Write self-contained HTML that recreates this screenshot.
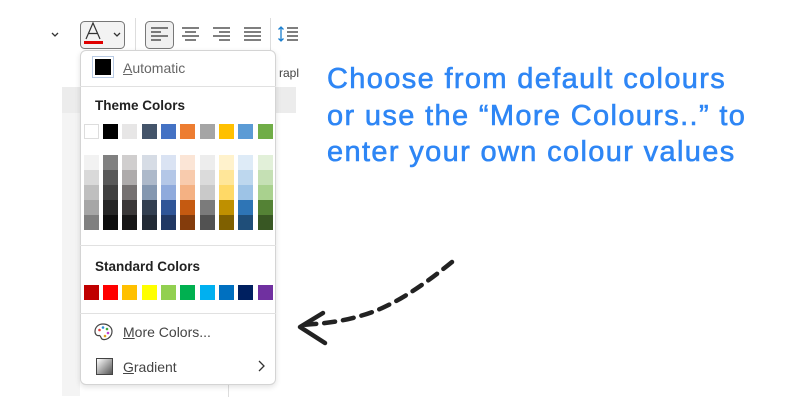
<!DOCTYPE html>
<html><head><meta charset="utf-8"><style>
*{margin:0;padding:0;box-sizing:border-box}
body{width:800px;height:400px;background:#fff;position:relative;overflow:hidden;font-family:"Liberation Sans",sans-serif}
.a{position:absolute}
.sw{position:absolute;width:15px;height:15px}
.col{position:absolute;width:15px;top:155px}
.col div{height:15px}
.txt{position:absolute;left:327px;color:#2e86f5;font-size:29px;line-height:36.5px;-webkit-text-stroke:0.6px #2e86f5;letter-spacing:1.35px;white-space:nowrap}
.lbl{position:absolute;font-size:13.5px;font-weight:bold;color:#222}
.sep{position:absolute;left:80px;width:196px;height:1px;background:#e1e1e1}
.it{position:absolute;font-size:14px;color:#444}
</style></head><body>
<div class="a" style="left:62px;top:87px;width:234px;height:26px;background:#ececec"></div>
<div class="a" style="left:62px;top:113px;width:18px;height:283px;background:#f4f4f4"></div>
<div class="a" style="left:228px;top:385px;width:1px;height:12px;background:#ddd"></div>
<div class="a" style="left:279px;top:66px;font-size:12px;color:#444">rapl</div>

<svg class="a" style="left:0;top:0" width="300" height="50">
<path d="M52 33 l3 3 l3 -3" stroke="#333" stroke-width="1.3" fill="none"/>
<rect x="80.5" y="21.5" width="44" height="27" rx="4" fill="#f3f3f3" stroke="#777"/>
<path d="M86 39 L93 23 L100 39 M88.5 33.5 h9" stroke="#333" stroke-width="1.2" fill="none"/>
<rect x="84" y="41" width="19" height="3" fill="#e00000"/>
<path d="M114 33 l3 3 l3 -3" stroke="#333" stroke-width="1.3" fill="none"/>
<line x1="135.5" y1="18" x2="135.5" y2="50" stroke="#ddd"/>
<rect x="145.5" y="21.5" width="28" height="27" rx="4" fill="#f0f0f0" stroke="#777"/>
<path d="M151 28h17M151 32h10M151 36h17M151 40h10" stroke="#333" stroke-width="1.2"/>
<path d="M182 28h17M185 32h11M182 36h17M185 40h11" stroke="#333" stroke-width="1.2"/>
<path d="M213 28h17M219 32h11M213 36h17M219 40h11" stroke="#333" stroke-width="1.2"/>
<path d="M244 28h17M244 32h17M244 36h17M244 40h17" stroke="#333" stroke-width="1.2"/>
<line x1="270.5" y1="18" x2="270.5" y2="50" stroke="#ddd"/>
<path d="M281 27v14M278.5 29.5l2.5-2.5 2.5 2.5M278.5 38.5l2.5 2.5 2.5-2.5" stroke="#1a7fd0" stroke-width="1.3" fill="none"/>
<path d="M287 28h11M287 32h11M287 36h11M287 40h11" stroke="#333" stroke-width="1.2"/>
</svg>

<div class="a" style="left:80px;top:50px;width:196px;height:335px;background:#fff;border:1px solid #d4d4d4;border-radius:6px;box-shadow:0 2px 6px rgba(0,0,0,0.12)"></div>
<div class="a" style="left:92px;top:56px;width:22px;height:22px;border:1px solid #b9cbe4;background:#fff"></div>
<div class="a" style="left:95px;top:59px;width:16px;height:16px;background:#000"></div>
<div class="it" style="left:123px;top:60px;color:#666"><u>A</u>utomatic</div>
<div class="sep" style="top:86px"></div>
<div class="lbl" style="left:95px;top:98px">Theme Colors</div>

<div class="sw" style="left:84px;top:124px;background:#fff;border:1px solid #ddd"></div>
<div class="sw" style="left:103px;top:124px;background:#000"></div>
<div class="sw" style="left:122px;top:124px;background:#e7e6e6"></div>
<div class="sw" style="left:142px;top:124px;background:#44546a"></div>
<div class="sw" style="left:161px;top:124px;background:#4472c4"></div>
<div class="sw" style="left:180px;top:124px;background:#ed7d31"></div>
<div class="sw" style="left:200px;top:124px;background:#a5a5a5"></div>
<div class="sw" style="left:219px;top:124px;background:#ffc000"></div>
<div class="sw" style="left:238px;top:124px;background:#5b9bd5"></div>
<div class="sw" style="left:258px;top:124px;background:#70ad47"></div>

<div class="col" style="left:84px"><div style="background:#f2f2f2"></div><div style="background:#d9d9d9"></div><div style="background:#bfbfbf"></div><div style="background:#a6a6a6"></div><div style="background:#808080"></div></div>
<div class="col" style="left:103px"><div style="background:#808080"></div><div style="background:#595959"></div><div style="background:#404040"></div><div style="background:#262626"></div><div style="background:#0d0d0d"></div></div>
<div class="col" style="left:122px"><div style="background:#d0cece"></div><div style="background:#aeabab"></div><div style="background:#757171"></div><div style="background:#3b3838"></div><div style="background:#171616"></div></div>
<div class="col" style="left:142px"><div style="background:#d6dce5"></div><div style="background:#adb9ca"></div><div style="background:#8497b0"></div><div style="background:#333f50"></div><div style="background:#222a35"></div></div>
<div class="col" style="left:161px"><div style="background:#dae3f3"></div><div style="background:#b4c7e7"></div><div style="background:#8faadc"></div><div style="background:#2f5597"></div><div style="background:#203864"></div></div>
<div class="col" style="left:180px"><div style="background:#fbe5d6"></div><div style="background:#f8cbad"></div><div style="background:#f4b183"></div><div style="background:#c55a11"></div><div style="background:#843c0c"></div></div>
<div class="col" style="left:200px"><div style="background:#ededed"></div><div style="background:#dbdbdb"></div><div style="background:#c9c9c9"></div><div style="background:#7b7b7b"></div><div style="background:#525252"></div></div>
<div class="col" style="left:219px"><div style="background:#fff2cc"></div><div style="background:#ffe699"></div><div style="background:#ffd966"></div><div style="background:#bf9000"></div><div style="background:#7f6000"></div></div>
<div class="col" style="left:238px"><div style="background:#deebf7"></div><div style="background:#bdd7ee"></div><div style="background:#9dc3e6"></div><div style="background:#2e75b6"></div><div style="background:#1f4e79"></div></div>
<div class="col" style="left:258px"><div style="background:#e2f0d9"></div><div style="background:#c5e0b4"></div><div style="background:#a9d18e"></div><div style="background:#548235"></div><div style="background:#385723"></div></div>

<div class="sep" style="top:245px"></div>
<div class="lbl" style="left:95px;top:259px">Standard Colors</div>
<div class="sw" style="left:84px;top:285px;background:#c00000"></div>
<div class="sw" style="left:103px;top:285px;background:#ff0000"></div>
<div class="sw" style="left:122px;top:285px;background:#ffc000"></div>
<div class="sw" style="left:142px;top:285px;background:#ffff00"></div>
<div class="sw" style="left:161px;top:285px;background:#92d050"></div>
<div class="sw" style="left:180px;top:285px;background:#00b050"></div>
<div class="sw" style="left:200px;top:285px;background:#00b0f0"></div>
<div class="sw" style="left:219px;top:285px;background:#0070c0"></div>
<div class="sw" style="left:238px;top:285px;background:#002060"></div>
<div class="sw" style="left:258px;top:285px;background:#7030a0"></div>
<div class="sep" style="top:313px"></div>

<svg class="a" style="left:94px;top:323px" width="20" height="18">
<path d="M9 1C4 1 1 4.5 1 8.5c0 3 2 4.5 4 4 1.5-.3 1.5 1.5 2.5 3 1 1.5 4 1.5 6.5 0C17 13.5 18 11 18 8.5 18 4 14 1 9 1z" fill="none" stroke="#444" stroke-width="1.2"/>
<circle cx="5.5" cy="7" r="1.3" fill="#e03c3c"/><circle cx="9" cy="4.5" r="1.3" fill="#2b8ad6"/><circle cx="13" cy="6" r="1.3" fill="#3fae3f"/><circle cx="14" cy="10" r="1.3" fill="#c23fd1"/><circle cx="11" cy="13" r="1.3" fill="#e0a020"/>
</svg>
<div class="it" style="left:123px;top:324px"><u>M</u>ore Colors...</div>
<div class="a" style="left:96px;top:358px;width:17px;height:17px;border:1.5px solid #444;background:linear-gradient(135deg,#fff 0%,#999 60%,#555 100%)"></div>
<div class="it" style="left:123px;top:359px"><u>G</u>radient</div>
<svg class="a" style="left:256px;top:359px" width="10" height="14"><path d="M3 2l5 5-5 5" stroke="#333" stroke-width="1.3" fill="none"/></svg>

<div class="txt" style="top:61px">Choose from default colours</div>
<div class="txt" style="top:97.5px">or use the “More Colours..” to</div>
<div class="txt" style="top:134px">enter your own colour values</div>

<svg class="a" style="left:270px;top:250px" width="200" height="110">
<path d="M182 12 C150 38 120 58 90 66 C70 72 50 74 30 75" stroke="#222" stroke-width="4.5" fill="none" stroke-dasharray="11 8" stroke-linecap="round"/>
<path d="M53 63 L30 77 L55 93" stroke="#222" stroke-width="4.5" fill="none" stroke-linecap="round" stroke-linejoin="round"/>
</svg>
</body></html>
